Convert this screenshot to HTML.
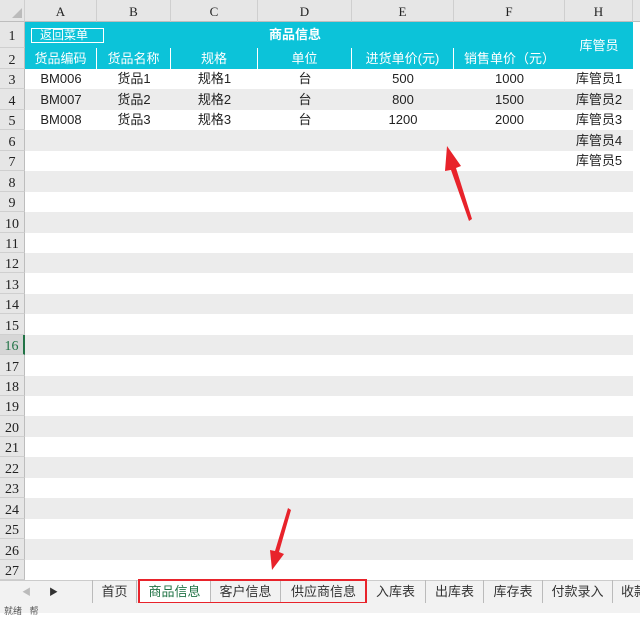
<!DOCTYPE html><html><head><meta charset="utf-8"><style>
body{margin:0;width:640px;height:613px;overflow:hidden;background:#fff;font-family:"Liberation Sans","Noto Sans CJK SC",sans-serif;font-size:13px;color:#222;position:relative}
.a{position:absolute;box-sizing:border-box}
.ch{top:0;height:22px;background:#e6e6e6;border-right:1px solid #cfcfcf;border-bottom:1px solid #bdbdbd;text-align:center;font-family:"Liberation Serif",serif;font-size:13px;line-height:24px}
.rh{left:0;width:25px;background:#e6e6e6;border-right:1px solid #bdbdbd;border-bottom:1px solid #cfcfcf;font-family:"Liberation Serif",serif;font-size:14px;text-align:center}
.t{background:#0cc3d9;color:#fff;text-align:center}
.c{text-align:center;line-height:20.5px}
.tab{top:580px;height:23px;line-height:23px;text-align:center;font-size:13px;color:#333;border-right:1px solid #bbb}
</style></head><body>
<div class="a" style="left:0;top:0;width:640px;height:22px;background:#e6e6e6"></div>
<div class="a ch" style="left:0;width:25px"></div>
<svg class="a" style="left:12px;top:8px" width="10" height="10"><polygon points="10,0 10,10 0,10" fill="#bbb"/></svg>
<div id="g"></div>
<script>
var cols=[["A",25,97],["B",97,171],["C",171,258],["D",258,352],["E",352,454],["F",454,565],["H",565,633]];
var h="";
cols.forEach(c=>{h+=`<div class="a ch" style="left:${c[1]}px;width:${c[2]-c[1]}px">${c[0]}</div>`});
h+=`<div class="a ch" style="left:633px;width:7px;border-right:0"></div>`;
var y=[22,48,69];for(var i=3;i<=27;i++)y.push(Math.round(69+(i-2)*20.44));
for(var r=1;r<=27;r++){var t=y[r-1],b=y[r];
h+=`<div class="a rh" style="top:${t}px;height:${b-t}px;line-height:${b-t+4}px;${r==16?'color:#217346;background:#d6d6d6;border-right:2px solid #217346':''}">${r}</div>`;
if(r>=3)h+=`<div class="a" style="left:25px;top:${t}px;width:608px;height:${b-t}px;background:${r%2==0?'#ececec':'#fff'}"></div>`;}
document.getElementById('g').innerHTML=h;
</script>
<div class="a t" style="left:25px;top:22px;width:540px;height:26px;line-height:26px;font-weight:bold">商品信息</div>
<div class="a" style="left:31px;top:28px;width:73px;height:15px;border:1px solid #fff;color:#fff;font-size:12px;line-height:13px;padding-left:8px">返回菜单</div>
<div class="a t" style="left:565px;top:22px;width:68px;height:47px;line-height:47px">库管员</div>
<div class="a t" style="left:25px;top:48px;width:72px;height:21px;line-height:21px;border-right:1px solid #fff">货品编码</div>
<div class="a t" style="left:97px;top:48px;width:74px;height:21px;line-height:21px;border-right:1px solid #fff">货品名称</div>
<div class="a t" style="left:171px;top:48px;width:87px;height:21px;line-height:21px;border-right:1px solid #fff">规格</div>
<div class="a t" style="left:258px;top:48px;width:94px;height:21px;line-height:21px;border-right:1px solid #fff">单位</div>
<div class="a t" style="left:352px;top:48px;width:102px;height:21px;line-height:21px;border-right:1px solid #fff">进货单价(元)</div>
<div class="a t" style="left:454px;top:48px;width:111px;height:21px;line-height:21px">销售单价（元）</div>
<div class="a" style="left:25px;top:69px;width:608px">
<div style="position:relative;height:62px">
<div class="a c" style="left:0;top:0;width:72px">BM006<br>BM007<br>BM008</div>
<div class="a c" style="left:72px;top:0;width:74px">货品1<br>货品2<br>货品3</div>
<div class="a c" style="left:146px;top:0;width:87px">规格1<br>规格2<br>规格3</div>
<div class="a c" style="left:233px;top:0;width:94px">台<br>台<br>台</div>
<div class="a c" style="left:327px;top:0;width:102px">500<br>800<br>1200</div>
<div class="a c" style="left:429px;top:0;width:111px">1000<br>1500<br>2000</div>
<div class="a c" style="left:540px;top:0;width:68px">库管员1<br>库管员2<br>库管员3<br>库管员4<br>库管员5</div>
</div></div>
<div class="a" style="left:0;top:580px;width:640px;height:23px;background:#f2f2f2;border-top:1px solid #ccc"></div>
<div class="a" style="left:22px;top:585px;color:#bbb;font-size:9px">◀</div>
<div class="a" style="left:49px;top:585px;color:#333;font-size:9px">▶</div>
<div class="a tab" style="left:92px;width:45px;border-left:1px solid #bbb">首页</div>
<div class="a tab" style="left:139px;width:72px;background:#fff;color:#217346">商品信息</div>
<div class="a tab" style="left:211px;width:70px">客户信息</div>
<div class="a tab" style="left:281px;width:85px;border-right:0">供应商信息</div>
<div class="a tab" style="left:366px;width:60px">入库表</div>
<div class="a tab" style="left:426px;width:58px">出库表</div>
<div class="a tab" style="left:484px;width:59px">库存表</div>
<div class="a tab" style="left:543px;width:70px">付款录入</div>
<div class="a tab" style="left:613px;width:40px;border:0;text-align:left;padding-left:8px">收款</div>
<div class="a" style="left:138px;top:579px;width:229px;height:25px;border:2px solid #e8232b"></div>
<div class="a" style="left:0;top:603px;width:640px;height:10px;background:#f2f2f2;font-size:9px;color:#555;line-height:16px;padding-left:4px">就绪 &nbsp; 帮</div>
<svg class="a" style="left:0;top:0" width="640" height="613">
<polygon points="469,221 472,219 456,168 461,166 447,146 445,171 451,170" fill="#e8232b"/>
<polygon points="288,508 291,510 279,552 284,554 272,570 270,550 275,551" fill="#e8232b"/>
</svg>
</body></html>
